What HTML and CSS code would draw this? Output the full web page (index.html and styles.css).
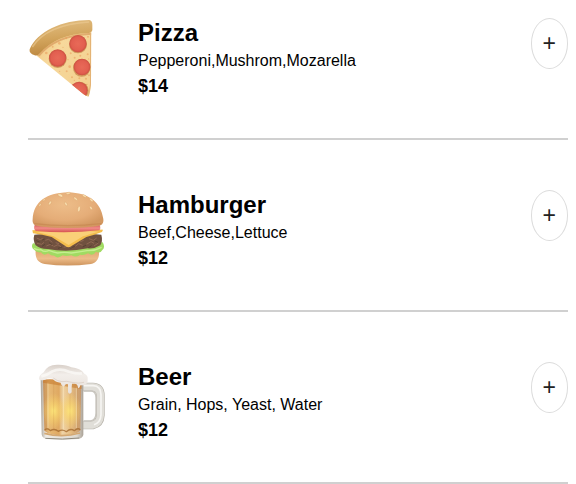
FILE: index.html
```html
<!DOCTYPE html>
<html lang="en">
<head>
<meta charset="utf-8">
<meta name="viewport" content="width=device-width, initial-scale=1">
<title>Menu</title>
<link rel="stylesheet" href="styles.css">
</head>
<body>
<main class="menu">
  <article class="item">
    <svg class="picture" viewBox="24 24 240 240" aria-hidden="true">
      <defs>
        <linearGradient id="crust" x1="0.4" y1="0" x2="0.6" y2="1">
          <stop offset="0" stop-color="#e2bd80"/><stop offset=".5" stop-color="#d2a45c"/><stop offset="1" stop-color="#ba843c"/>
        </linearGradient>
        <linearGradient id="cheese" x1="0" y1="0" x2="1" y2="1">
          <stop offset="0" stop-color="#eec078"/><stop offset=".35" stop-color="#f7d99c"/><stop offset="1" stop-color="#f3cf90"/>
        </linearGradient>
        <radialGradient id="pepperoni">
          <stop offset="0" stop-color="#e86a58"/><stop offset=".75" stop-color="#e25f50"/><stop offset="1" stop-color="#cc5141"/>
        </radialGradient>
        <clipPath id="slice"><path d="M50 137Q110 58 214 50L213 222Q211 250 205 260Q199 259 190 252Z"/></clipPath>
      </defs>
      <path d="M50 137Q110 58 214 50L213 222Q211 250 205 260Q199 259 190 252Z" fill="url(#cheese)"/>
      <g clip-path="url(#slice)">
        <path d="M56 138Q104 76 215 71" fill="none" stroke="#d99a5c" stroke-width="6" opacity=".7"/>
        <path d="M212 70V222L205 260" fill="none" stroke="#e4b375" stroke-width="4"/>
        <g fill="#e79b58" opacity=".55">
          <circle cx="118" cy="100" r="4"/><circle cx="139" cy="85" r="3"/><circle cx="129" cy="112" r="2"/>
          <circle cx="152" cy="130" r="3"/><circle cx="144" cy="149" r="2"/><circle cx="149" cy="170" r="4"/>
          <circle cx="140" cy="184" r="3"/><circle cx="164" cy="143" r="3"/><circle cx="181" cy="137" r="3"/>
          <circle cx="203" cy="133" r="3"/><circle cx="206" cy="147" r="2"/><circle cx="198" cy="206" r="3"/>
          <circle cx="178" cy="205" r="3"/><circle cx="156" cy="202" r="3"/><circle cx="119" cy="184" r="2"/>
          <circle cx="79" cy="129" r="4"/><circle cx="98" cy="110" r="3"/><circle cx="207" cy="196" r="3"/>
          <circle cx="201" cy="223" r="2"/><circle cx="204" cy="80" r="3"/><circle cx="163" cy="211" r="2"/>
        </g>
        <g fill="#b97538" opacity=".6">
          <circle cx="113" cy="147" r="27"/><circle cx="174" cy="103" r="27"/><circle cx="185" cy="174" r="26"/><circle cx="179" cy="242" r="27"/>
        </g>
        <g fill="url(#pepperoni)">
          <circle cx="113" cy="144" r="26"/><circle cx="174" cy="101" r="26"/><circle cx="186" cy="171" r="25"/><circle cx="177" cy="241" r="26"/>
        </g>
      </g>
      <path d="M29 118C51 65 126 30 208 30Q217 31 217 45V61Q215 68 207 69C140 70 92 94 58 131Q52 139 44 136Q26 130 29 118Z" fill="url(#crust)"/>
      <path d="M37 111C66 66 126 41 207 36" fill="none" stroke="#edcc94" stroke-width="5" opacity=".6"/>
    </svg>
    <div class="details">
      <h2 class="name">Pizza</h2>
      <p class="ingredients">Pepperoni,Mushrom,Mozarella</p>
      <p class="price">$14</p>
    </div>
    <button class="add" type="button" aria-label="Add Pizza">+</button>
  </article>

  <article class="item">
    <svg class="picture" viewBox="24 30 240 240" aria-hidden="true">
      <defs>
        <radialGradient id="bun" cx=".45" cy=".35" r=".65">
          <stop offset="0" stop-color="#edbd89"/><stop offset=".65" stop-color="#e5ad78"/><stop offset="1" stop-color="#d39861"/>
        </radialGradient>
        <linearGradient id="base" x1="0" y1="0" x2="0" y2="1">
          <stop offset="0" stop-color="#dfa56d"/><stop offset=".55" stop-color="#edbc89"/><stop offset="1" stop-color="#ce955e"/>
        </linearGradient>
        <linearGradient id="tomato" x1="0" y1="0" x2="0" y2="1">
          <stop offset="0" stop-color="#cf5353"/><stop offset=".5" stop-color="#f18c88"/><stop offset="1" stop-color="#d65351"/>
        </linearGradient>
      </defs>
      <path d="M47 210Q142 229 237 210C239 233 232 248 213 252Q142 261 74 252C53 248 45 235 47 210Z" fill="url(#base)"/>
      <path d="M39 190Q142 207 248 187Q257 201 247 210Q240 222 228 215Q219 230 204 220Q191 228 181 224Q168 234 154 226Q139 230 128 226Q113 238 103 227Q91 227 84 220Q71 230 63 217Q51 219 43 210Q31 201 39 190Z" fill="#a1db62"/>
      <path d="M42 205Q53 211 63 209Q74 218 87 211Q103 217 113 219Q132 215 154 219Q178 216 201 212Q224 213 245 202" fill="none" stroke="#c5ee90" stroke-width="4"/>
      <path d="M43 164Q142 152 244 164Q249 183 241 196Q224 207 203 205Q142 218 82 207Q59 207 47 196Q38 181 43 164Z" fill="#70513f"/>
      <g fill="none" stroke="#997059" stroke-width="3" opacity=".75">
        <path d="M50 174l11 5 7-4M51 190l14 3 7-6M76 181l10-3 11 9M79 198l12-5 9 5M101 200l13-6 9 7M107 188l10 3M131 202l16-4 10 5M166 199l10-8 12 5M181 185l10-4M199 193l14-8 9 5M207 176l13 5 10-7M222 198l13-9"/>
      </g>
      <g fill="none" stroke="#493a2d" stroke-width="3" opacity=".65">
        <path d="M49 182l10 4M66 199l9-6M87 188l9 6M114 205l12-4M151 205l13-6M188 201l11-6M205 203l10-6M225 183l9 4M67 180l7-3"/>
      </g>
      <path d="M37 151Q142 141 249 149L246 156Q225 164 199 171L153 199Q145 205 135 197L95 171Q66 163 39 160Z" fill="#f4bd4c"/>
      <path d="M48 156Q142 148 237 155Q205 163 189 169L146 195L101 169Q76 162 48 156Z" fill="#fad078"/>
      <path d="M44 135Q142 129 239 135Q244 147 237 151Q142 161 48 153Q39 147 44 135Z" fill="url(#tomato)"/>
      <path d="M38 117C41 67 77 39 144 37C207 39 243 67 250 117Q252 130 242 136Q221 143 142 144Q63 143 45 136Q36 130 38 117Z" fill="url(#bun)"/>
      <path d="M43 131Q142 143 244 131" fill="none" stroke="#c18049" stroke-width="4" opacity=".5"/>
      <g fill="#f9dfb0" stroke="#d49a60" stroke-width="1">
        <ellipse cx="90" cy="69" rx="3" ry="7" transform="rotate(35 90 69)"/>
        <ellipse cx="121" cy="46" rx="4" ry="8" transform="rotate(-65 121 46)"/>
        <ellipse cx="145" cy="40" rx="3" ry="7" transform="rotate(80 145 40)"/>
        <ellipse cx="138" cy="72" rx="3" ry="7" transform="rotate(-35 138 72)"/>
        <ellipse cx="167" cy="56" rx="3" ry="7" transform="rotate(-50 167 56)"/>
        <ellipse cx="177" cy="87" rx="4" ry="8" transform="rotate(10 177 87)"/>
        <ellipse cx="193" cy="48" rx="3" ry="7" transform="rotate(-60 193 48)"/>
        <ellipse cx="214" cy="60" rx="3" ry="7" transform="rotate(-45 214 60)"/>
        <ellipse cx="213" cy="84" rx="3" ry="6" transform="rotate(-35 213 84)"/>
        <ellipse cx="60" cy="75" rx="2" ry="5" transform="rotate(35 60 75)"/>
        <ellipse cx="72" cy="59" rx="2" ry="5" transform="rotate(50 72 59)"/>
      </g>
    </svg>
    <div class="details">
      <h2 class="name">Hamburger</h2>
      <p class="ingredients">Beef,Cheese,Lettuce</p>
      <p class="price">$12</p>
    </div>
    <button class="add" type="button" aria-label="Add Hamburger">+</button>
  </article>

  <article class="item">
    <svg class="picture" viewBox="24 30 240 240" aria-hidden="true">
      <defs>
        <linearGradient id="beer" x1="0" y1="0" x2="1" y2="0">
          <stop offset="0" stop-color="#c48d56"/><stop offset=".16" stop-color="#e7b975"/><stop offset=".42" stop-color="#dfa861"/>
          <stop offset=".5" stop-color="#efd4a8"/><stop offset=".72" stop-color="#e6bc80"/><stop offset="1" stop-color="#c6986c"/>
        </linearGradient>
        <radialGradient id="glow">
          <stop offset="0" stop-color="#fde67a"/><stop offset=".4" stop-color="#fbda70" stop-opacity=".65"/><stop offset="1" stop-color="#fbd469" stop-opacity="0"/>
        </radialGradient>
        <linearGradient id="foam" x1="0" y1="0" x2="0" y2="1">
          <stop offset="0" stop-color="#d9d0c9"/><stop offset=".35" stop-color="#f2eeea"/><stop offset="1" stop-color="#e8e0da"/>
        </linearGradient>
        <linearGradient id="glass" x1="0" y1="0" x2="1" y2="0">
          <stop offset="0" stop-color="#aaa398"/><stop offset=".12" stop-color="#eeebe5"/><stop offset=".85" stop-color="#ded9d0"/><stop offset="1" stop-color="#a9a196"/>
        </linearGradient>
      </defs>
      <path d="M187 105H218Q241 106 241 130V190Q240 214 218 219H187" fill="none" stroke="#b7b3aa" stroke-width="26"/>
      <path d="M187 105H218Q241 106 241 130V190Q240 214 218 219H187" fill="none" stroke="#e0ded8" stroke-width="22"/>
      <path d="M190 101H219Q243 102 243 128V188Q242 211 222 218" fill="none" stroke="#f6f5f2" stroke-width="5"/>
      <path d="M192 117H214Q228 119 228 137V183Q228 203 212 207H192" fill="none" stroke="#c8c5be" stroke-width="4"/>
      <path d="M62 84H190V249Q187 260 174 261Q127 266 79 261Q66 258 65 247Z" fill="url(#glass)"/>
      <path d="M69 83H184L181 236Q166 249 126 250Q87 249 73 236Z" fill="url(#beer)"/>
      <ellipse cx="101" cy="177" rx="34" ry="54" fill="url(#glow)"/>
      <ellipse cx="150" cy="177" rx="35" ry="54" fill="url(#glow)"/>
      <g fill="none" stroke-linejoin="round">
        <path d="M79 91V231M101 91V233M126 96V238M150 101V233M173 109V231" stroke="#bd823d" stroke-width="3" opacity=".2"/>
        <path d="M84 91V228M130 96V236M169 104V229" stroke="#fff0c9" stroke-width="3" opacity=".45"/>
        <path d="M74 234Q82 226 91 236Q104 228 115 238Q127 230 139 239Q152 228 163 236Q173 226 181 233" stroke="#a56b2f" stroke-width="4" opacity=".8"/>
        <path d="M73 244Q126 258 180 243" stroke="#d4a872" stroke-width="5"/>
        <path d="M76 259Q127 264 178 258" stroke="#8f897d" stroke-width="3"/>
      </g>
      <path d="M69 83Q103 76 126 91Q155 96 185 92V111Q126 101 69 92Z" fill="#c77c31" opacity=".6"/>
      <path d="M57 80Q57 69 71 61Q81 39 111 38Q139 37 154 46Q181 48 193 65Q205 69 203 83Q204 96 191 100H181Q178 112 174 107Q173 95 164 95H156Q154 109 155 121Q149 129 144 121V97Q137 93 133 103Q126 105 122 92Q105 90 98 80Q86 76 75 83Q58 88 57 80Z" fill="url(#foam)"/>
      <path d="M64 73Q82 69 97 58Q119 47 147 59Q170 66 186 64" fill="none" stroke="#fbf9f7" stroke-width="8" opacity=".75"/>
      <path d="M100 78Q112 88 126 89Q141 86 155 91Q178 96 192 91" fill="none" stroke="#d5c6bb" stroke-width="3" opacity=".6"/>
    </svg>
    <div class="details">
      <h2 class="name">Beer</h2>
      <p class="ingredients">Grain, Hops, Yeast, Water</p>
      <p class="price">$12</p>
    </div>
    <button class="add" type="button" aria-label="Add Beer">+</button>
  </article>
</main>
</body>
</html>
```
FILE: styles.css
```css
* {
  box-sizing: border-box;
}

body {
  margin: 0;
  background: #fff;
  color: #000;
  font-family: "Liberation Sans", Arial, sans-serif;
}

.menu {
  padding: 0 8px 0 28px;
}

.item {
  display: flex;
  align-items: flex-start;
  gap: 30px;
  padding: 50px 0 40px;
  border-bottom: 2px solid #d0d0d0;
}

.item:first-child {
  padding-top: 18px;
}

.picture {
  flex: none;
  width: 80px;
  height: 80px;
}

.details {
  flex: 1;
  min-width: 0;
}

.name,
.ingredients,
.price {
  margin: 0;
}

.name {
  font-size: 24px;
  line-height: 30px;
}

.ingredients {
  font-size: 16px;
  line-height: 26px;
}

.price {
  font-size: 18px;
  font-weight: bold;
  line-height: 24px;
}

.add {
  flex: none;
  padding: 11px;
  border: 1px solid #dcdcdc;
  border-radius: 50%;
  background: #fff;
  color: #222;
  font-family: inherit;
  font-size: 23px;
  line-height: 27px;
  cursor: pointer;
}
```
